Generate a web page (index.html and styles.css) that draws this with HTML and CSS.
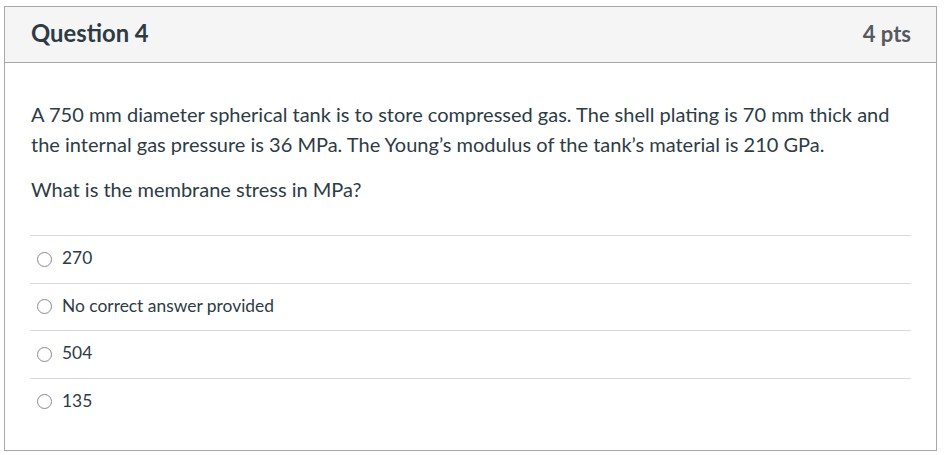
FILE: index.html
```html
<!DOCTYPE html>
<html lang="en">
<head>
<meta charset="utf-8">
<title>Question 4</title>
<link rel="stylesheet" href="styles.css">
</head>
<body>
<div class="question">
  <div class="header">
    <h2 class="title">Question 4</h2>
    <span class="points">4 pts</span>
  </div>
  <div class="content">
    <p class="text">A 750 mm diameter spherical tank is to store compressed gas. The shell plating is 70 mm thick and the internal gas pressure is 36 MPa. The Young’s modulus of the tank’s material is 210 GPa.</p>
    <p class="text">What is the membrane stress in MPa?</p>
    <div class="answers">
      <label class="answer"><span class="radio"></span><span class="label">270</span></label>
      <label class="answer"><span class="radio"></span><span class="label">No correct answer provided</span></label>
      <label class="answer"><span class="radio"></span><span class="label">504</span></label>
      <label class="answer"><span class="radio"></span><span class="label">135</span></label>
    </div>
  </div>
</div>
</body>
</html>
```

FILE: styles.css
```css
html, body {
  margin: 0;
  padding: 0;
  background: #ffffff;
}
body {
  padding: 6px 7px 4px 4px;
  font-family: Lato, "Liberation Sans", sans-serif;
  color: #2d3b45;
}
.question {
  border: 1px solid #a8a8a8;
  box-sizing: border-box;
  height: 445px;
}
.header {
  display: flex;
  justify-content: space-between;
  align-items: center;
  background: #f5f5f5;
  border-bottom: 1px solid #a8a8a8;
  height: 56px;
  box-sizing: border-box;
  padding: 0 25px 3px 26px;
}
.title {
  margin: 0;
  font-size: 23.8px;
  font-weight: 700;
  color: #2d3b45;
}
.points {
  font-size: 22px;
  font-weight: 700;
  color: #555a5e;
}
.content {
  padding: 36px 25px 0 25px;
}
.text {
  margin: 0 0 15px 1px;
  font-size: 20px;
  line-height: 30px;
}
.answers {
  margin-top: 31px;
}
.answer {
  display: flex;
  align-items: center;
  height: 47.5px;
  box-sizing: border-box;
  padding-bottom: 3px;
  border-top: 1px solid #d9d9d9;
  font-size: 17.4px;
}
.radio {
  width: 13px;
  height: 13px;
  border: 1px solid #8a8a8a;
  border-radius: 50%;
  margin: 3px 10px 0 7px;
  flex: none;
}
```
